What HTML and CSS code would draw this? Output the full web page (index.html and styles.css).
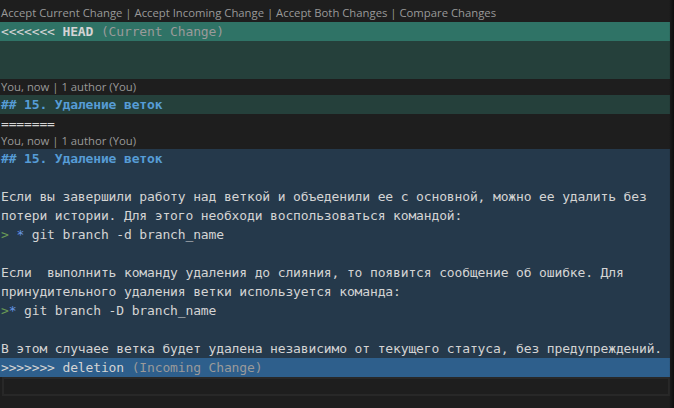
FILE: index.html
```html
<!DOCTYPE html>
<html lang="ru">
<head>
<meta charset="utf-8">
<title>Merge conflict</title>
<link rel="stylesheet" href="styles.css">
</head>
<body>
<div class="editor">
  <div class="lens lens-top"><span>Accept Current Change</span> | <span>Accept Incoming Change</span> | <span>Accept Both Changes</span> | <span>Compare Changes</span></div>
  <div class="row cur-head"><span class="mk">&lt;&lt;&lt;&lt;&lt;&lt;&lt;</span> <span class="ref">HEAD</span> <span class="hint">(Current Change)</span></div>
  <div class="row cur"></div>
  <div class="row cur"></div>
  <div class="lens">You, now | 1 author (You)</div>
  <div class="row cur"><span class="h">## 15. Удаление веток</span></div>
  <div class="row">=======</div>
  <div class="lens">You, now | 1 author (You)</div>
  <div class="row inc"><span class="h">## 15. Удаление веток</span></div>
  <div class="row inc"></div>
  <div class="row inc">Если вы завершили работу над веткой и объеденили ее с основной, можно ее удалить без</div>
  <div class="row inc">потери истории. Для этого необходи воспользоваться командой:</div>
  <div class="row inc"><span class="q">&gt;</span> <span class="li">*</span> git branch -d branch_name</div>
  <div class="row inc"></div>
  <div class="row inc">Если  выполнить команду удаления до слияния, то появится сообщение об ошибке. Для</div>
  <div class="row inc">принудительного удаления ветки используется команда:</div>
  <div class="row inc"><span class="q">&gt;</span><span class="li">*</span> git branch -D branch_name</div>
  <div class="row inc"></div>
  <div class="row inc">В этом случаее ветка будет удалена независимо от текущего статуса, без предупреждений.</div>
  <div class="row inc-head"><span class="mk">&gt;&gt;&gt;&gt;&gt;&gt;&gt;</span> <span class="ref2">deletion</span> <span class="hint">(Incoming Change)</span></div>
  <div class="row current-line"></div>
  <div class="shadow"></div>
</div>
</body>
</html>
```
FILE: styles.css
```css
html, body {
  margin: 0;
  padding: 0;
  background: #1e1e1e;
  overflow: hidden;
}
.editor {
  position: relative;
  width: 674px;
  height: 408px;
  overflow: hidden;
  background: #1e1e1e;
}
.row {
  height: 19px;
  line-height: 19px;
  width: 670px;
  padding-left: 1px;
  box-sizing: border-box;
  font-family: "DejaVu Sans Mono", monospace;
  font-size: 13px;
  letter-spacing: -0.14px;
  color: #d4d4d4;
  white-space: pre;
}
.lens {
  height: 16px;
  line-height: 16px;
  font-family: "Open Sans", sans-serif;
  font-size: 11.3px;
  color: #999999;
  white-space: pre;
  padding-left: 1px;
}
.lens-top {
  height: 22px;
  line-height: 18px;
  padding-top: 4px;
  box-sizing: border-box;
}
.cur-head { background: #2f7366; }
.cur { background: #25403b; }
.inc { background: #25394b; }
.inc-head { background: #2e5f8c; }
.mk { color: #d4d4d4; }
.ref { font-weight: bold; color: #d4d4d4; }
.ref2 { color: #d4d4d4; }
.hint { color: #9a9a9a; }
.h { color: #569cd6; font-weight: bold; }
.q { color: #6a9955; }
.li { color: #6796e6; }
.current-line {
  margin-left: 2px;
  width: 668px;
  height: 19px;
  border: 2px solid #282828;
  box-sizing: border-box;
}
.shadow {
  position: absolute;
  top: 0;
  right: 0;
  width: 5px;
  height: 408px;
  background: linear-gradient(to right, rgba(0,0,0,0), rgba(0,0,0,0.55));
}
```
